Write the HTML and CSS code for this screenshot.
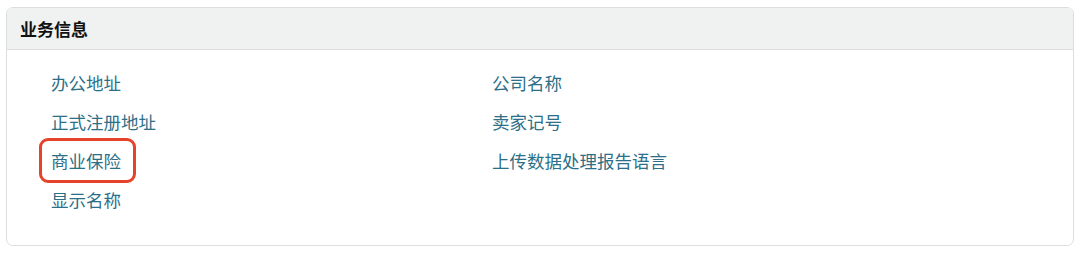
FILE: index.html
```html
<!DOCTYPE html>
<html lang="zh-CN">
<head>
<meta charset="utf-8">
<title>业务信息</title>
<link rel="stylesheet" href="styles.css">
</head>
<body>
<section class="panel">
  <header class="panel-head">业务信息</header>
  <div class="panel-body">
    <ul class="col">
      <li><a class="link" href="#">办公地址</a></li>
      <li><a class="link" href="#">正式注册地址</a></li>
      <li><a class="link highlight" href="#">商业保险</a></li>
      <li><a class="link" href="#">显示名称</a></li>
    </ul>
    <ul class="col">
      <li><a class="link" href="#">公司名称</a></li>
      <li><a class="link" href="#">卖家记号</a></li>
      <li><a class="link" href="#">上传数据处理报告语言</a></li>
    </ul>
  </div>
</section>
</body>
</html>
```
FILE: styles.css
```css
html, body {
  margin: 0;
  padding: 0;
  background: #ffffff;
}
body {
  font-family: "Noto Sans CJK SC", "Noto Sans", sans-serif;
  padding: 7px 0 0 6px;
}
.panel {
  width: 1066px;
  height: 237px;
  border: 1px solid #dcdede;
  border-radius: 7px;
  overflow: hidden;
  display: flex;
  flex-direction: column;
}
.panel-head {
  height: 42px;
  box-sizing: border-box;
  background: #f0f2f2;
  border-bottom: 1px solid #dcdede;
  padding-left: 13px;
  display: flex;
  align-items: center;
  font-size: 17px;
  font-weight: bold;
  color: #111111;
}
.panel-body {
  display: grid;
  grid-template-columns: 441px 1fr;
  padding: 13px 0 0 44px;
}
.col {
  list-style: none;
  margin: 0;
  padding: 0;
}
.col li {
  height: 39px;
  line-height: 39px;
}
.link {
  position: relative;
  display: inline-block;
  line-height: 39px;
  font-size: 17.5px;
  color: #2c6f88;
  text-decoration: none;
}
.highlight::after {
  content: "";
  position: absolute;
  left: -12px;
  right: -15px;
  top: -3px;
  bottom: -3px;
  border: 3.5px solid #e5432b;
  border-radius: 9px;
}
```
